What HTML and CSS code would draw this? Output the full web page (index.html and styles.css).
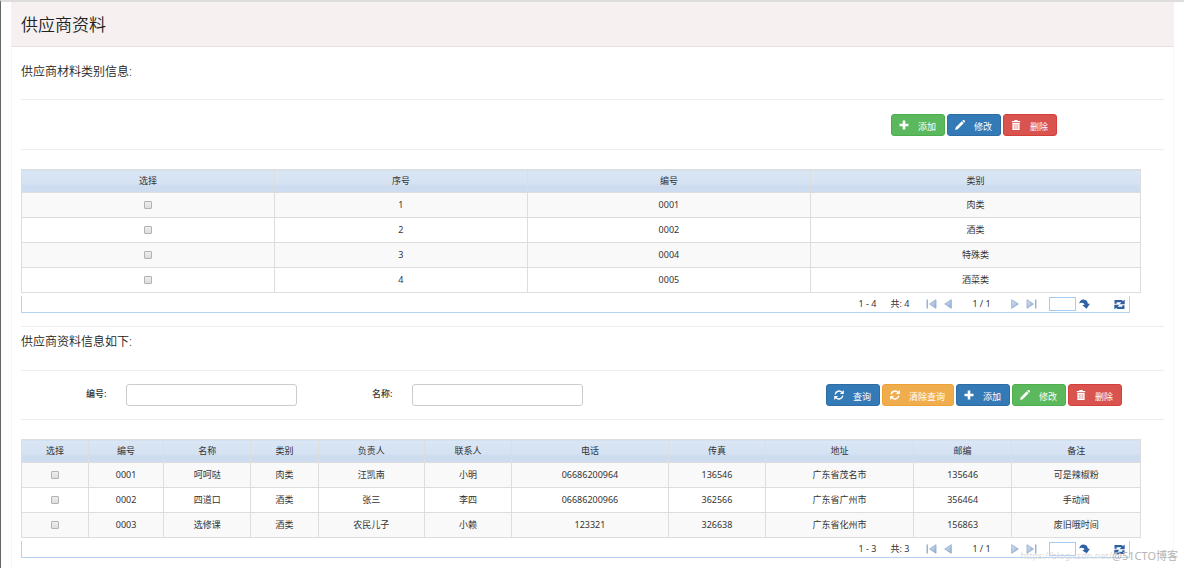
FILE: index.html
```html
<!DOCTYPE html>
<html lang="zh-CN">
<head>
<meta charset="utf-8">
<meta name="viewport" content="width=device-width, initial-scale=1">
<title>供应商资料</title>
<link rel="stylesheet" href="styles.css">
</head>
<body>
<svg class="sprite" aria-hidden="true">
  <symbol id="plus" viewBox="0 0 10 10"><path d="M3.700 .5h2.600v3.200H9.500v2.600H6.300V9.500H3.700V6.300H.5V3.700h3.200z" fill="currentColor"/></symbol>
  <symbol id="pencil" viewBox="0 0 10 10"><path d="M0 10l.8-2.700L6.800 1.300l1.900 1.900L2.700 9.200zM7.300.8L8.100 0q.5-.3 1 .1l.8.8q.3.5 0 1l-.7.8z" fill="currentColor"/></symbol>
  <symbol id="trash" viewBox="0 0 10 10"><path d="M3.300 1V0h3.400v1h2.500v1.300H.8V1zM1.400 3h7.200v7H1.400z" fill="currentColor"/><path d="M3.300 4v5M5 4v5M6.700 4v5" stroke="#d9534f" stroke-width=".6" opacity=".8"/></symbol>
  <symbol id="sync" viewBox="0 0 10 10"><path d="M1.200 4.400A3.900 3.900 0 0 1 8 2.400M8.800 5.600A3.900 3.900 0 0 1 2 7.600" fill="none" stroke="currentColor" stroke-width="1.400"/><path d="M9.800 0v3.900H5.900zM.2 10V6.100h3.900z" fill="currentColor"/></symbol>
  <symbol id="prev" viewBox="0 0 8 10"><path d="M7.300.7v8.600L.7 5z" fill="url(#steel)" stroke="#8ea9cc" stroke-width=".8"/></symbol>
  <symbol id="next" viewBox="0 0 8 10"><path d="M.7.7v8.600L7.300 5z" fill="url(#steel)" stroke="#8ea9cc" stroke-width=".8"/></symbol>
  <symbol id="first" viewBox="0 0 11 10"><path d="M.5.500h1.500v9H.5z" fill="#9bb3d3"/><path d="M10 .7v8.600L3.500 5z" fill="url(#steel)" stroke="#8ea9cc" stroke-width=".8"/></symbol>
  <symbol id="last" viewBox="0 0 11 10"><path d="M9 .5h1.500v9H9z" fill="#9bb3d3"/><path d="M1 .7v8.600L7.500 5z" fill="url(#steel)" stroke="#8ea9cc" stroke-width=".8"/></symbol>
  <symbol id="jump" viewBox="0 0 11 10"><path d="M.2 4.500C.7 1.500 2.500.4 4.500.5 7.500.7 8.700 2.500 8.900 4.800H11L7.500 9.700 3.300 6.200l2.200-.4C5.200 3.800 2.500 3 .2 4.500z" fill="#2f62a5"/></symbol>
  <symbol id="reload" viewBox="0 0 11 11"><path d="M1.600 4.800V2.200h5.700l1.200 1M9.400 6.200v2.600H3.700l-1.200-1" fill="none" stroke="#2f5f9f" stroke-width="2.200"/><path d="M10.700.4v4.900H5.500zM.3 10.600V5.700h5.200z" fill="#2f5f9f"/></symbol>
  <defs><linearGradient id="steel" x1="0" y1="0" x2="1" y2="1"><stop offset="0" stop-color="#dce7f5"/><stop offset="1" stop-color="#8eaad0"/></linearGradient></defs>
</svg>
<main class="panel">
  <header class="panel-head"><h1 class="title">供应商资料</h1></header>
  <div class="panel-body">
    <section class="section">
      <h2 class="subtitle">供应商材料类别信息:</h2>
      <div class="toolbar toolbar-category">
        <div class="buttons">
          <button type="button" class="btn green"><svg class="icon"><use href="#plus"/></svg>添加</button>
          <button type="button" class="btn blue"><svg class="icon"><use href="#pencil"/></svg>修改</button>
          <button type="button" class="btn red"><svg class="icon"><use href="#trash"/></svg>删除</button>
        </div>
      </div>
      <table class="grid">
        <colgroup><col class="w-select"><col class="w-order"><col class="w-code"><col class="w-kind"></colgroup>
        <thead><tr><th>选择</th><th>序号</th><th>编号</th><th>类别</th></tr></thead>
        <tbody>
          <tr><td><input type="checkbox" class="check" aria-label="选择 0001"></td><td>1</td><td>0001</td><td>肉类</td></tr>
          <tr><td><input type="checkbox" class="check" aria-label="选择 0002"></td><td>2</td><td>0002</td><td>酒类</td></tr>
          <tr><td><input type="checkbox" class="check" aria-label="选择 0004"></td><td>3</td><td>0004</td><td>特殊类</td></tr>
          <tr><td><input type="checkbox" class="check" aria-label="选择 0005"></td><td>4</td><td>0005</td><td>酒菜类</td></tr>
        </tbody>
      </table>
      <nav class="pager" aria-label="类别分页">
        <span class="range">1 - 4</span><span class="total">共: 4</span>
        <button type="button" class="page-btn" aria-label="首页"><svg class="wide"><use href="#first"/></svg></button>
        <button type="button" class="page-btn" aria-label="上一页"><svg class="narrow"><use href="#prev"/></svg></button>
        <span class="pages">1 / 1</span>
        <button type="button" class="page-btn" aria-label="下一页"><svg class="narrow"><use href="#next"/></svg></button>
        <button type="button" class="page-btn" aria-label="末页"><svg class="wide"><use href="#last"/></svg></button>
        <span class="go"><input type="text" class="page-input" aria-label="页码"><button type="button" class="page-btn" aria-label="跳转"><svg class="wide"><use href="#jump"/></svg></button></span>
        <button type="button" class="page-btn reload" aria-label="刷新"><svg class="square"><use href="#reload"/></svg></button>
      </nav>
    </section>
    <section class="section section-detail">
      <h2 class="subtitle">供应商资料信息如下:</h2>
      <form class="toolbar toolbar-detail">
        <div class="field"><label for="code">编号:</label><input type="text" id="code" class="text"></div>
        <div class="field"><label for="name">名称:</label><input type="text" id="name" class="text"></div>
        <div class="buttons">
          <button type="button" class="btn blue"><svg class="icon"><use href="#sync"/></svg>查询</button>
          <button type="button" class="btn orange"><svg class="icon"><use href="#sync"/></svg>清除查询</button>
          <button type="button" class="btn blue"><svg class="icon"><use href="#plus"/></svg>添加</button>
          <button type="button" class="btn green"><svg class="icon"><use href="#pencil"/></svg>修改</button>
          <button type="button" class="btn red"><svg class="icon"><use href="#trash"/></svg>删除</button>
        </div>
      </form>
      <table class="grid">
        <colgroup><col class="d-select"><col class="d-code"><col class="d-name"><col class="d-kind"><col class="d-owner"><col class="d-contact"><col class="d-phone"><col class="d-fax"><col class="d-address"><col class="d-zip"><col class="d-note"></colgroup>
        <thead><tr><th>选择</th><th>编号</th><th>名称</th><th>类别</th><th>负责人</th><th>联系人</th><th>电话</th><th>传真</th><th>地址</th><th>邮编</th><th>备注</th></tr></thead>
        <tbody>
          <tr><td><input type="checkbox" class="check" aria-label="选择 呵呵哒"></td><td>0001</td><td>呵呵哒</td><td>肉类</td><td>汪凯南</td><td>小明</td><td>06686200964</td><td>136546</td><td>广东省茂名市</td><td>135646</td><td>可是辣椒粉</td></tr>
          <tr><td><input type="checkbox" class="check" aria-label="选择 四道口"></td><td>0002</td><td>四道口</td><td>酒类</td><td>张三</td><td>李四</td><td>06686200966</td><td>362566</td><td>广东省广州市</td><td>356464</td><td>手动阀</td></tr>
          <tr><td><input type="checkbox" class="check" aria-label="选择 选修课"></td><td>0003</td><td>选修课</td><td>酒类</td><td>农民儿子</td><td>小赖</td><td>123321</td><td>326638</td><td>广东省化州市</td><td>156863</td><td>废旧哦时间</td></tr>
        </tbody>
      </table>
      <nav class="pager" aria-label="资料分页">
        <span class="range">1 - 3</span><span class="total">共: 3</span>
        <button type="button" class="page-btn" aria-label="首页"><svg class="wide"><use href="#first"/></svg></button>
        <button type="button" class="page-btn" aria-label="上一页"><svg class="narrow"><use href="#prev"/></svg></button>
        <span class="pages">1 / 1</span>
        <button type="button" class="page-btn" aria-label="下一页"><svg class="narrow"><use href="#next"/></svg></button>
        <button type="button" class="page-btn" aria-label="末页"><svg class="wide"><use href="#last"/></svg></button>
        <span class="go"><input type="text" class="page-input" aria-label="页码"><button type="button" class="page-btn" aria-label="跳转"><svg class="wide"><use href="#jump"/></svg></button></span>
        <button type="button" class="page-btn reload" aria-label="刷新"><svg class="square"><use href="#reload"/></svg></button>
      </nav>
    </section>
  </div>
</main>
<div class="watermark"><span class="source">https://blog.csdn.net/</span><span class="owner">@51CTO博客</span></div>
</body>
</html>
```

FILE: styles.css
```css
* { box-sizing: border-box; }

body {
  position: relative;
  min-height: 100vh;
  margin: 0;
  padding: 0 10px;
  border-top: 2px solid #ddd;
  border-left: 1px solid #666;
  background: #fff;
  color: #333;
  font: 9px/16px "Noto Sans", "Noto Sans CJK SC", sans-serif;
}

button, input { font: inherit; }

.sprite { position: absolute; width: 0; height: 0; }

.panel {
  min-height: calc(100vh - 2px);
  box-shadow: inset 1px 0 #f7f7f7, inset -1px 0 #f7f7f7;
}

.panel-head {
  padding: 11px 10px 9px;
  border-bottom: 1px solid #eadfdf;
  background: #f6f0f0;
}

.title { margin: 0; color: #222; font-size: 17px; line-height: 24px; font-weight: 350; }

.panel-body { padding: 0 10px; }

.subtitle {
  margin: 0;
  padding: 13px 0 15px;
  color: #222;
  font-size: 12px;
  line-height: 24px;
  font-weight: 350;
}

.section-detail { margin-top: 13px; border-top: 1px solid #eee; }
.section-detail .subtitle { padding: 3px 0 16px; }

.toolbar {
  display: flex;
  align-items: center;
  margin-bottom: 19px;
  padding: 13px 0;
  border: solid #eee;
  border-width: 1px 0;
}
.toolbar-category { padding: 14px 107px 13px 0; }
.toolbar-detail { padding-right: 42px; }

.buttons { display: flex; gap: 2px; margin-left: auto; }

.btn {
  display: flex;
  align-items: flex-end;
  gap: 9px;
  height: 22px;
  padding: 0 8px 0 7px;
  border: 1px solid;
  border-radius: 3px;
  color: #fff;
  line-height: 16px;
  white-space: nowrap;
}
.icon { width: 10px; height: 10px; align-self: center; }
.green { background: #5cb85c; border-color: #4cae4c; }
.blue { background: #337ab7; border-color: #2e6da4; }
.red { background: #d9534f; border-color: #d43f3a; }
.orange { background: #f0ad4e; border-color: #eea236; }

.field {
  display: grid;
  flex: 0 0 286px;
  grid-template-columns: 1fr 2fr;
  gap: 20px;
  padding-right: 10px;
}
.field label { font-weight: 500; line-height: 20px; text-align: right; white-space: nowrap; }
.text {
  width: 100%;
  height: 22px;
  padding: 2px 8px;
  border: 1px solid #ccc;
  border-radius: 3px;
  background: #fff;
}

.grid {
  width: 98%;
  border-collapse: collapse;
  table-layout: fixed;
  text-align: center;
}
.grid th, .grid td { height: 25px; padding: 0 0 1px; border: 1px solid #ddd; }
.grid th {
  height: 23px;
  background: linear-gradient(#dae6f4, #d5e2f2 60%, #cedcf0 70%, #cddcf0);
  font-weight: 400;
}
.grid tbody tr:nth-child(odd) { background: #f9f9f9; }

.check {
  display: block;
  width: 8px;
  height: 8px;
  margin: 0 auto;
  appearance: none;
  border: 1px solid #b3b3b3;
  border-radius: 1px;
  background: linear-gradient(#eee, #ddd);
}
.check:checked { background: #337ab7; }

.w-select, .w-order { width: 22.6%; }
.w-code { width: 25.3%; }
.w-kind { width: 29.5%; }
.d-select, .d-kind { width: 6%; }
.d-code { width: 6.7%; }
.d-name, .d-contact { width: 7.8%; }
.d-owner { width: 9.5%; }
.d-phone { width: 14%; }
.d-fax { width: 8.7%; }
.d-address { width: 13.2%; }
.d-zip { width: 8.8%; }
.d-note { width: 11.5%; }

.pager {
  display: flex;
  align-items: center;
  justify-content: flex-end;
  gap: 7px;
  width: 97%;
  margin-top: 3px;
  padding-right: 4px;
  border: 1px solid #b5d2f2;
  border-top: 0;
}
.total { padding: 0 10px 0 7px; }
.pages { padding: 0 13px; }
.page-btn { display: flex; padding: 0; border: 0; background: none; }
.wide { width: 11px; height: 10px; }
.square { width: 11px; height: 11px; }
.narrow { width: 8px; height: 10px; }
.go { display: flex; align-items: center; gap: 3px; padding-left: 5px; }
.page-input {
  width: 27px;
  height: 14px;
  padding: 0 2px;
  border: 1px solid #a9cbf3;
  background: #fff;
}
.reload { margin-left: 17px; }

.watermark {
  position: absolute;
  right: 6px;
  bottom: 4px;
  display: flex;
  font-size: 11px;
  line-height: 16px;
  pointer-events: none;
}
.source { color: #ddd; font-size: 9px; }
.owner { color: #b5b5b5; }
```
